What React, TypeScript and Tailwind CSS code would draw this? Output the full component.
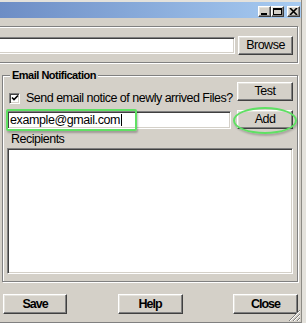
import React from "react";

const raised =
  "bg-[#d4d0c8] border border-t-white border-l-white border-r-[#404040] border-b-[#404040] shadow-[inset_-1px_-1px_0_#808080,inset_1px_1px_0_#e4e2dc]";
const sunken =
  "bg-white border border-t-[#808080] border-l-[#808080] border-r-white border-b-white shadow-[inset_1px_1px_0_#404040,inset_-1px_-1px_0_#d4d0c8]";
const etched = "border border-[#808080] shadow-[inset_1px_1px_0_#fff,1px_1px_0_#fff]";

function TitleBtn({ kind }: { kind: "min" | "max" | "close" }) {
  return (
    <div className={`${raised} w-[13px] h-[11px] flex items-center justify-center`}>
      <svg width="9" height="7" viewBox="0 0 9 7">
        {kind === "min" && <rect x="1" y="5" width="6" height="2" fill="#000" />}
        {kind === "max" && (
          <>
            <rect x="0.5" y="0.5" width="8" height="6" fill="none" stroke="#000" />
            <rect x="0" y="0" width="9" height="2" fill="#000" />
          </>
        )}
        {kind === "close" && (
          <path d="M1 0 L8 7 M8 0 L1 7" stroke="#000" strokeWidth="1.6" />
        )}
      </svg>
    </div>
  );
}

export default function App() {
  return (
    <div
      className="w-[306px] h-[323px] flex bg-[#e4e2dc] overflow-hidden text-black"
      style={{ fontFamily: '"Liberation Sans", Arial, sans-serif' }}
    >
      <div className="relative w-[302px] h-[323px] flex flex-col bg-[#d4d0c8] border-r border-[#8c8a84] border-b border-b-[#808080]">
        {/* top frame strip */}
        <div className="h-[2px] bg-[#e4e2dc] shrink-0" />
        {/* title bar */}
        <div className="h-[16px] shrink-0 bg-gradient-to-r from-[#6d8dc5] to-[#a8ccf2] flex items-start justify-end pt-[4px] pr-[1px]">
          <TitleBtn kind="min" />
          <TitleBtn kind="max" />
          <div className="w-[3px]" />
          <TitleBtn kind="close" />
        </div>

        {/* top group */}
        <div className={`${etched} ml-[-4px] mr-[3px] mt-[8px] h-[37px] shrink-0`}>
          <div className="flex items-center gap-[3px] pt-[9px] pr-[4px]">
            <div className={`${sunken} flex-1 h-[17px]`} />
            <div className={`${raised} w-[55px] h-[19px] flex items-center justify-center text-[12.5px] tracking-[-0.5px]`}>
              Browse
            </div>
          </div>
        </div>

        {/* Email Notification group */}
        <div className={`${etched} relative ml-[2px] mr-[3px] mt-[12px] pt-[6px] px-[4px] pb-[7px] shrink-0`}>
          <div className="absolute left-[7px] top-[-7px] px-[2px] bg-[#d4d0c8] text-[11px] font-bold leading-[13px] tracking-[-0.5px]">
            Email Notification
          </div>

          <div className="flex justify-between items-start">
            <div className="flex items-center mt-[9px] ml-[2px] gap-[6px]">
              <div className={`${sunken} w-[11px] h-[11px] flex items-center justify-center`}>
                <svg width="8" height="8" viewBox="0 0 8 8">
                  <path d="M1 3.5 L3 5.5 L7 1.5" stroke="#000" strokeWidth="1.6" fill="none" />
                </svg>
              </div>
              <span className="text-[12.5px] leading-[14px] tracking-[-0.5px]">
                Send email notice of newly arrived Files?
              </span>
            </div>
            <div className={`${raised} w-[56px] h-[19px] flex items-center justify-center text-[12.5px] tracking-[-0.5px]`}>
              Test
            </div>
          </div>

          <div className="relative flex items-center gap-[6px] mt-[5px]">
            <div className={`${sunken} w-[224px] h-[18px] flex items-center pl-[2px] text-[12.5px] tracking-[-0.4px] leading-[14px]`}>
              <span>example@gmail.com</span>
              <span className="inline-block w-[1px] h-[12px] bg-black ml-[1px]" />
            </div>
            <div className={`${raised} w-[56px] h-[19px] flex items-center justify-center text-[12.5px] tracking-[-0.5px]`}>
              Add
            </div>
            <div className="absolute left-[-1px] top-[-1px] w-[131px] h-[22px] border-2 border-[#5fe063] rounded-[2px] shadow-[1px_2px_2px_rgba(0,0,0,0.25)] pointer-events-none" />
            <div className="absolute left-[226px] top-[-3px] w-[64px] h-[27px] border-2 border-[#5fe063] rounded-[50%] shadow-[1px_2px_2px_rgba(0,0,0,0.2)] pointer-events-none" />
          </div>

          <div className="mt-[3px] ml-[4px] text-[12.5px] leading-[14px] tracking-[-0.5px]">Recipients</div>
          <div className={`${sunken} mt-[2px] h-[126px]`} />
        </div>

        {/* bottom buttons */}
        <div className="flex justify-between mt-[12px] mx-[3px] shrink-0">
          <div className={`${raised} w-[64px] h-[20px] flex items-center justify-center text-[12.5px] font-bold tracking-[-1px]`}>
            Save
          </div>
          <div className={`${raised} w-[65px] h-[20px] flex items-center justify-center text-[12.5px] font-bold tracking-[-1px]`}>
            Help
          </div>
          <div className={`${raised} w-[65px] h-[20px] flex items-center justify-center text-[12.5px] font-bold tracking-[-1px]`}>
            Close
          </div>
        </div>

        {/* resize grip */}
        <svg className="absolute right-0 bottom-0" width="13" height="13" viewBox="0 0 13 13">
          <path d="M12 1 L1 12 M12 5 L5 12 M12 9 L9 12" stroke="#808080" strokeWidth="1" />
          <path d="M12 2 L2 12 M12 6 L6 12 M12 10 L10 12" stroke="#ffffff" strokeWidth="1" />
        </svg>
      </div>
      <div className="w-[4px] h-full bg-[#e4e2dc]" />
    </div>
  );
}
